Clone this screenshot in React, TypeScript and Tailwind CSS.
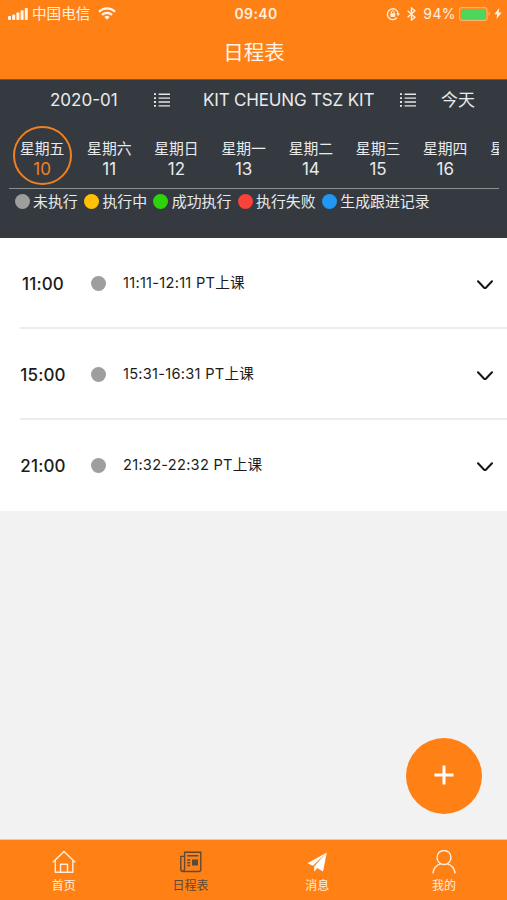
import type { ReactNode } from 'react';

const days = [
	{ week: '星期五', date: '10' },
	{ week: '星期六', date: '11' },
	{ week: '星期日', date: '12' },
	{ week: '星期一', date: '13' },
	{ week: '星期二', date: '14' },
	{ week: '星期三', date: '15' },
	{ week: '星期四', date: '16' },
	{ week: '星期五', date: '' },
];

const legend = [
	{ label: '未执行', color: 'bg-[#9e9e9e]' },
	{ label: '执行中', color: 'bg-[#ffc107]' },
	{ label: '成功执行', color: 'bg-[#2fd30b]' },
	{ label: '执行失败', color: 'bg-[#f9423a]' },
	{ label: '生成跟进记录', color: 'bg-[#2196f3]' },
];

const lessons = [
	{ time: '11:00', title: '11:11-12:11 PT上课' },
	{ time: '15:00', title: '15:31-16:31 PT上课' },
	{ time: '21:00', title: '21:32-22:32 PT上课' },
];

const ListIcon = () => (
	<svg className="mb-[2px]" width="16" height="14" viewBox="0 0 16 14" fill="#e4e6e8">
		<path d="M0 .3h2v1.8H0zM4.6.5H16v1.4H4.6zM0 4.2h2V6H0zM4.6 4.4H16v1.4H4.6zM0 8.1h2v1.8H0zM4.6 8.3H16v1.4H4.6zM0 12h2v1.8H0zM4.6 12.2H16v1.4H4.6z" />
	</svg>
);

const StatusBar = () => (
	<div className="grid h-[28px] grid-cols-[1fr_auto_1fr] items-center pl-2 pr-[5px] text-[14px] text-[#fff0e0]">
		<div className="flex items-center">
			<svg width="20" height="12" viewBox="0 0 20 12" fill="#fff5ea">
				<rect x="0" y="8" width="3" height="4" rx=".8" />
				<rect x="4.2" y="6.5" width="3" height="5.5" rx=".8" />
				<rect x="8.4" y="4.5" width="3" height="7.5" rx=".8" />
				<rect x="12.6" y="2.3" width="3" height="9.7" rx=".8" />
				<rect x="16.8" y="0" width="3" height="12" rx=".8" />
			</svg>
			<span className="ml-1 pt-px text-[14.6px]">中国电信</span>
			<svg className="mb-px ml-2" width="18" height="13" viewBox="0 0 18 13" fill="none" stroke="#fff5ea" strokeWidth="2.2">
				<path d="M1 4.7a11.4 11.4 0 0 1 16 0" />
				<path d="M4 7.9a7.1 7.1 0 0 1 10 0" />
				<path d="M6.4 10.1a3.7 3.7 0 0 1 5.2 0L9 12.8z" fill="#fff5ea" stroke="none" />
			</svg>
		</div>
		<span className="pl-[2px] text-[14px] leading-[26px] font-semibold tracking-[0.4px]">09:40</span>
		<div className="flex items-center justify-end">
			<svg className="mb-px" width="14" height="14" viewBox="0 0 14 14" fill="none" stroke="#fff0e0" strokeWidth="1.3">
				<path d="M11 10.6A5.4 5.4 0 1 1 12.2 7" />
				<path d="M10.2 6.4h3.8l-1.9 2.5z" fill="#fff0e0" stroke="none" />
				<rect x="4.4" y="6.2" width="4.8" height="3.7" fill="#fff0e0" stroke="none" />
				<path d="M5.4 6.4V5.2a1.4 1.4 0 0 1 2.8 0v1.2" strokeWidth="1" />
			</svg>
			<svg className="mb-px ml-[7px]" width="9" height="14" viewBox="0 0 9 14" fill="none" stroke="#fff0e0" strokeWidth="1.4">
				<path d="M.6 3.8 8 10.2 4.5 13V1L8 3.8.6 10.2" />
			</svg>
			<span className="ml-[7px] pb-px text-[14px] tracking-[0.4px]">94%</span>
			<svg className="mb-px ml-[3px]" width="32" height="14" viewBox="0 0 32 14">
				<rect x=".6" y=".6" width="27.4" height="12.8" rx="2.4" fill="none" stroke="#ffb273" strokeWidth="1.1" />
				<rect x="2" y="2" width="24.4" height="10" rx="1" fill="#4cd75b" />
				<path d="M29.6 4.8c1.8.6 1.8 3.8 0 4.4z" fill="#ffb273" />
			</svg>
			<svg className="mb-px ml-[3px]" width="8" height="11" viewBox="0 0 8 11" fill="#fff5ea">
				<path d="M5.3 0 .3 6.2h3L2.4 11l5.3-6.5h-3z" />
			</svg>
		</div>
	</div>
);

const Tab = ({ label, active, children }: { label: string; active?: boolean; children: ReactNode }) => (
	<div
		className={
			active
				? 'flex flex-1 flex-col items-center pt-[10px] pl-px text-[#5c4a38]'
				: 'flex flex-1 flex-col items-center pt-[10px] pl-px text-[#ffeedd]'
		}
	>
		<svg width="24" height="24" viewBox="0 0 24 24" fill="none" stroke="currentColor" strokeWidth="1.4">
			{children}
		</svg>
		<span className="mt-[3px] text-[12px] leading-[18px]">{label}</span>
	</div>
);

const App = () => {
	return (
		<div className="relative flex h-[900px] w-[507px] flex-col overflow-hidden bg-[#f2f2f2] font-[Inter,'Noto_Sans_CJK_SC',sans-serif]">
			<header className="h-[79px] shrink-0 bg-[#ff8116]">
				<StatusBar />
				<h1 className="pl-px text-center text-[20.5px] leading-[49px] text-[#fff5ea]">日程表</h1>
			</header>

			<section className="h-[159px] shrink-0 border-t border-[#7a5634] bg-[#353a41] text-[#e8eaec]">
				<div className="flex h-[41px] items-center text-[17px]">
					<span className="w-[154px] pl-[50px]">2020-01</span>
					<ListIcon />
					<span className="ml-[33px] w-[197px] tracking-[-0.17px] whitespace-nowrap">KIT CHEUNG TSZ KIT</span>
					<ListIcon />
					<span className="ml-[25px]">今天</span>
				</div>
				<div className="mr-[8px] ml-[9px] flex h-[68px] overflow-hidden border-b border-[#8b8f93]">
					{days.map((day, i) => (
						<div key={i} className="flex w-[67.2px] shrink-0 justify-center pt-[5px] pr-px">
							<div
								className={
									i === 0
										? 'flex size-[59px] shrink-0 flex-col items-center rounded-full border-2 border-[#ef8122] pt-[11px]'
										: 'flex size-[59px] shrink-0 flex-col items-center pt-[13px]'
								}
							>
								<span className="text-[14.8px] leading-5 whitespace-nowrap">{day.week}</span>
								<span className={i === 0 ? 'text-[17px] leading-5 text-[#ef8122]' : 'text-[17px] leading-5'}>
									{day.date}
								</span>
							</div>
						</div>
					))}
				</div>
				<div className="flex h-[25px] items-center gap-[6.2px] pl-[14.5px] text-[14.9px]">
					{legend.map((item) => (
						<div key={item.label} className="flex items-center gap-[3.5px]">
							<i className={`size-[15px] rounded-full ${item.color}`} />
							<span className="pt-[2px]">{item.label}</span>
						</div>
					))}
				</div>
			</section>

			<main className="h-[273px] shrink-0 bg-white pl-5 text-[#1c1c1c]">
				{lessons.map((lesson) => (
					<div
						key={lesson.time}
						className="flex h-[91px] items-center border-b-2 border-[#ececec] pt-[3px] pr-[14px] last:border-white"
					>
						<span className="w-[46px] pt-px text-center text-[17px] font-medium tracking-[0.15px]">{lesson.time}</span>
						<i className="mb-px ml-[25px] size-[15px] rounded-full bg-[#9e9e9e]" />
						<span className="ml-[17px] flex-1 text-[14.6px] tracking-[0.27px]">{lesson.title}</span>
						<svg className="mt-[2px]" width="16" height="10" viewBox="0 0 16 10" fill="none" stroke="#161616" strokeWidth="2">
							<path d="M1 1.2l5.9 6.3q1.1 1.1 2.2 0L15 1.2" strokeLinecap="round" strokeLinejoin="round" />
						</svg>
					</div>
				))}
			</main>

			<button className="absolute top-[738px] left-[406px] flex size-[76px] items-center justify-center rounded-full bg-[#ff8116]">
				<svg className="mr-px mb-[2px]" width="20" height="20" viewBox="0 0 20 20" stroke="#fff" strokeWidth="3">
					<path d="M10 .5v19M.5 10h19" />
				</svg>
			</button>

			<nav className="mt-auto flex h-[61px] border-t border-[#ffc48e] bg-[#ff8116]">
				<Tab label="首页">
					<path d="M.8 12.3 12 1.5l11.2 10.8M3.3 10.3v11.9h17.5V10.3M8.5 22v-7.8h7V22" strokeLinejoin="round" />
				</Tab>
				<Tab label="日程表" active>
					<path d="M5.6 2.3h16.2v17.2c0 1.4-.7 2-2 2H4.2c-1.8 0-2.4-1-2.4-2.6V6.4h3.8zM5.6 6v11.9c0 2-.8 3.6-2.2 3.4M8.2 5.8h11M8.2 10h3M8.2 12.7h3M8.2 15.5h3" />
					<rect x="13" y="9.5" width="6" height="6" fill="currentColor" stroke="none" />
				</Tab>
				<Tab label="消息">
					<path d="M21.8 2.4 2.5 13.3l5.4 2.4zM21.8 2.4 9.2 16.4v5.4l3-3.8 5.8 3.4z" fill="#fff" stroke="none" />
				</Tab>
				<Tab label="我的">
					<circle cx="12" cy="7.5" r="7" />
					<path d="M.9 23.4c.5-5 3.6-8.4 7.7-9.6M15.4 13.8c4.1 1.2 7.2 4.6 7.7 9.6" />
				</Tab>
			</nav>
		</div>
	);
};

export default App;
